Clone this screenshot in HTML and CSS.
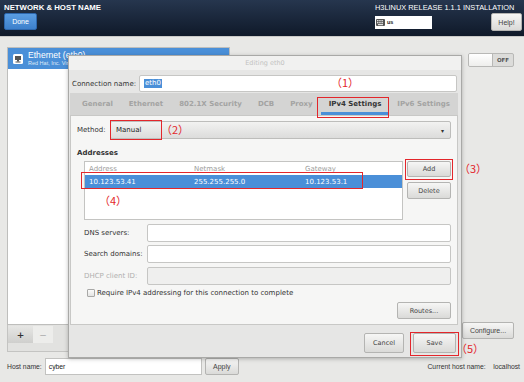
FILE: index.html
```html
<!DOCTYPE html>
<html lang="en">
<head>
    <meta charset="UTF-8">
    <title>Network &amp; Host Name</title>
    <link rel="stylesheet" href="styles.css">
</head>
<body>

    <div class="topbar">
        <div class="top-left">
            <div class="top-title">NETWORK &amp; HOST NAME</div>
            <button class="btn-done">Done</button>
        </div>
        <div class="top-right">
            <div class="release">H3LINUX RELEASE 1.1.1 INSTALLATION</div>
            <div class="top-row">
                <div class="kbd-box">
                    <svg class="kbd-icon" width="9" height="7" viewBox="0 0 9 7">
                        <rect x="0" y="0" width="9" height="7" rx="1" fill="#555"/>
                        <rect x="1" y="1" width="1.5" height="1.3" fill="#ddd"/>
                        <rect x="3.2" y="1" width="1.5" height="1.3" fill="#ddd"/>
                        <rect x="5.4" y="1" width="1.5" height="1.3" fill="#ddd"/>
                        <rect x="1" y="3" width="1.5" height="1.3" fill="#ddd"/>
                        <rect x="3.2" y="3" width="1.5" height="1.3" fill="#ddd"/>
                        <rect x="5.4" y="3" width="1.5" height="1.3" fill="#ddd"/>
                        <rect x="2" y="5" width="5" height="1.2" fill="#ddd"/>
                    </svg>
                    <span>us</span>
                </div>
                <button class="btn btn-help">Help!</button>
            </div>
        </div>
    </div>

    <div class="main">
        <div class="panes">
            <div class="devices">
                <div class="device-list">
                    <div class="device selected">
                        <svg class="dev-icon" width="10" height="10" viewBox="0 0 10 10">
                            <rect x="0" y="0" width="10" height="10" rx="1.5" fill="#fff"/>
                            <rect x="2" y="2" width="6" height="4" fill="#555"/>
                            <rect x="4" y="6" width="2" height="1.5" fill="#555"/>
                            <rect x="2.5" y="7.5" width="5" height="1" fill="#555"/>
                        </svg>
                        <div class="dev-text">
                            <div class="dev-name">Ethernet (eth0)</div>
                            <div class="dev-sub">Red Hat, Inc. Virtio network device</div>
                        </div>
                    </div>
                </div>
                <div class="list-tools">
                    <button class="tool">+</button>
                    <button class="tool off">&minus;</button>
                </div>
            </div>
            <div class="detail">
                <div class="toggle">
                    <span class="knob"></span>
                    <span class="toggle-text">OFF</span>
                </div>
                <button class="btn btn-configure">Configure...</button>
            </div>
        </div>

        <div class="hostbar">
            <span class="host-label">Host name:</span>
            <div class="host-input">cyber</div>
            <button class="btn btn-apply">Apply</button>
            <span class="current-host">Current host name:&nbsp;&nbsp;&nbsp;&nbsp;localhost</span>
        </div>
    </div>

    <!-- Editing dialog, floating above the page -->
    <div class="dialog">
        <div class="dlg-title">Editing eth0</div>
        <div class="dlg-body">
            <div class="conn-row">
                <span class="conn-label">Connection name:</span>
                <div class="field conn-field"><span class="sel">eth0</span></div>
            </div>

            <div class="tabs">
                <span class="tab">General</span>
                <span class="tab">Ethernet</span>
                <span class="tab">802.1X Security</span>
                <span class="tab">DCB</span>
                <span class="tab">Proxy</span>
                <span class="tab active">IPv4 Settings</span>
                <span class="tab">IPv6 Settings</span>
            </div>

            <div class="tab-panel">
                <div class="method-row">
                    <span class="method-label">Method:</span>
                    <div class="combo">
                        <span>Manual</span>
                        <span class="arrow">&#9662;</span>
                    </div>
                </div>

                <div class="section-title">Addresses</div>
                <div class="addresses">
                    <div class="addr-table">
                        <div class="addr-row addr-head">
                            <span>Address</span><span>Netmask</span><span>Gateway</span>
                        </div>
                        <div class="addr-row addr-sel">
                            <span>10.123.53.41</span><span>255.255.255.0</span><span>10.123.53.1</span>
                        </div>
                    </div>
                    <div class="addr-buttons">
                        <button class="btn btn-add">Add</button>
                        <button class="btn btn-delete">Delete</button>
                    </div>
                </div>

                <div class="form-row first">
                    <span class="form-label">DNS servers:</span>
                    <div class="field"></div>
                </div>
                <div class="form-row">
                    <span class="form-label">Search domains:</span>
                    <div class="field"></div>
                </div>
                <div class="form-row dim">
                    <span class="form-label">DHCP client ID:</span>
                    <div class="field disabled"></div>
                </div>

                <div class="check-row">
                    <span class="check"></span>
                    <span>Require IPv4 addressing for this connection to complete</span>
                </div>

                <div class="routes-row">
                    <button class="btn btn-routes">Routes...</button>
                </div>
            </div>

            <div class="dlg-buttons">
                <button class="btn btn-cancel">Cancel</button>
                <button class="btn btn-save">Save</button>
            </div>
        </div>
    </div>

    <!-- red annotation marks drawn over the screenshot -->
    <div class="mark mark-tab"></div>
    <div class="mark mark-method"></div>
    <div class="mark mark-add"></div>
    <div class="mark mark-addr"></div>
    <div class="mark mark-save"></div>

    <span class="note note-1">（1）</span>
    <span class="note note-2">（2）</span>
    <span class="note note-3">（3）</span>
    <span class="note note-4">（4）</span>
    <span class="note note-5">（5）</span>

</body>
</html>
```

FILE: styles.css
```css
/* General */
body {
    margin: 0;
    width: 524px;
    height: 382px;
    overflow: hidden;
    position: relative;
    background: #e8e8e6;
    font-family: 'DejaVu Sans', sans-serif;
    font-size: 7px;
    color: #333;
}

button {
    font-family: inherit;
    padding: 0;
}

.btn {
    background: linear-gradient(#f6f6f5, #dadad8);
    border: 1px solid #b4b4b2;
    border-radius: 2px;
    color: #444;
    font-size: 6.5px;
    height: 17px;
    box-sizing: border-box;
}

/* Top bar */
.topbar {
    height: 37px;
    box-sizing: border-box;
    padding: 3px 2px 0 4px;
    display: flex;
    justify-content: space-between;
    background: linear-gradient(#26364e, #0f1929);
    border-bottom: 1px solid #c9c9c7;
    font-family: 'Liberation Sans', sans-serif;
    color: white;
}

.top-title {
    font-weight: bold;
    font-size: 7.8px;
    line-height: 9px;
}

.btn-done {
    margin-top: 1px;
    width: 33px;
    height: 17px;
    background: linear-gradient(#5a9de2, #3d80cc);
    border: 1px solid #2d67ad;
    border-radius: 2px;
    color: white;
    font-family: 'Liberation Sans', sans-serif;
    font-size: 7px;
}

.top-right {
    display: flex;
    flex-direction: column;
    align-items: flex-start;
}

.release {
    font-size: 7.4px;
    line-height: 9px;
    white-space: nowrap;
}

.top-row {
    display: flex;
    align-items: center;
    gap: 59px;
    margin-top: 1px;
}

.kbd-box {
    width: 57px;
    height: 13px;
    background: white;
    display: flex;
    align-items: center;
    gap: 2px;
    padding-left: 1px;
    box-sizing: border-box;
    color: #222;
    font-weight: bold;
    font-size: 5.5px;
}

.btn-help {
    width: 31px;
    height: 18px;
    font-family: 'Liberation Sans', sans-serif;
    font-size: 7px;
}

/* Main area */
.panes {
    height: 315px;
    box-sizing: border-box;
    padding: 10px 10px 0 7px;
    display: flex;
}

.devices {
    width: 223px;
    display: flex;
    flex-direction: column;
}

.device-list {
    height: 278px;
    background: white;
    border: 1px solid #bebebc;
    box-sizing: border-box;
}

.device {
    height: 21px;
    display: flex;
    align-items: center;
    gap: 5px;
    padding-left: 5px;
}

.device.selected {
    background: #4a8fd8;
    color: white;
}

.dev-text {
    font-family: 'Liberation Sans', sans-serif;
}

.dev-name {
    font-size: 8.6px;
    line-height: 10px;
}

.dev-sub {
    font-size: 5.5px;
    line-height: 7px;
    color: #dfe9f7;
}

.list-tools {
    flex: 1;
    border: 1px solid #c4c4c2;
    border-top: none;
    background: #e2e2e0;
    display: flex;
    align-items: flex-start;
    padding-top: 1px;
}

.tool {
    width: 25px;
    height: 17px;
    border: none;
    background: linear-gradient(#e6e6e4, #cfcfcd);
    font-size: 9px;
    font-weight: bold;
    color: #333;
}

.tool.off {
    width: 20px;
    background: #ededeb;
    color: #aaa;
    font-weight: normal;
}

.detail {
    flex: 1;
    display: flex;
    flex-direction: column;
    align-items: flex-end;
}

.toggle {
    margin-top: 6px;
    width: 46px;
    height: 14px;
    display: flex;
    border: 1px solid #b8b8b6;
    border-radius: 2px;
    box-sizing: border-box;
    background: #dcdcda;
    overflow: hidden;
}

.knob {
    width: 23px;
    background: linear-gradient(#ffffff, #eeeeec);
    border-right: 1px solid #b8b8b6;
}

.toggle-text {
    flex: 1;
    text-align: center;
    line-height: 12px;
    font-size: 5.5px;
    font-weight: bold;
    color: #555;
}

.btn-configure {
    margin-top: auto;
    margin-bottom: 13px;
    width: 52px;
    font-family: 'Liberation Sans', sans-serif;
    font-size: 7px;
}

/* Host name bar */
.hostbar {
    margin-top: 6px;
    height: 17px;
    display: flex;
    align-items: center;
    padding: 0 4px 0 7px;
    font-family: 'Liberation Sans', sans-serif;
    font-size: 6.8px;
    color: #333;
}

.host-input {
    margin-left: 3px;
    width: 157px;
    height: 17px;
    box-sizing: border-box;
    background: white;
    border: 1px solid #c2c2c0;
    padding-left: 3px;
    line-height: 15px;
    color: #222;
}

.btn-apply {
    margin-left: 3px;
    width: 34px;
    font-family: 'Liberation Sans', sans-serif;
    font-size: 7px;
}

.current-host {
    margin-left: auto;
}

/* Dialog */
.dialog {
    position: absolute;
    left: 68px;
    top: 55px;
    width: 394px;
    height: 303px;
    box-sizing: border-box;
    background: #e6e6e5;
    border: 1px solid #a9a9a7;
    box-shadow: 0 1px 4px rgba(0, 0, 0, 0.25);
}

.dlg-title {
    height: 14px;
    line-height: 14px;
    text-align: center;
    background: #f1f1f0;
    color: #c2c2c0;
    font-size: 6.5px;
}

.dlg-body {
    padding: 0 3px 0 1px;
}

.conn-row {
    margin-top: 5px;
    display: flex;
    align-items: center;
}

.conn-label {
    width: 69px;
    padding-left: 2px;
    box-sizing: border-box;
}

.field {
    flex: 1;
    height: 18px;
    box-sizing: border-box;
    background: white;
    border: 1px solid #c6c6c4;
    border-radius: 2px;
    display: flex;
    align-items: center;
    padding-left: 4px;
}

.conn-field {
    height: 17px;
    margin-right: 1px;
}

.sel {
    background: #4a8fd8;
    color: white;
    padding: 0 1px;
    line-height: 9px;
}

.tabs {
    margin-top: 1px;
    height: 22px;
    background: #d4d4d3;
    display: flex;
    align-items: stretch;
    padding-left: 4px;
}

.tab {
    padding: 0 8px;
    display: flex;
    align-items: center;
    font-weight: bold;
    color: #a3a3a2;
    border-bottom: 3px solid transparent;
    padding-top: 3px;
}

.tab.active {
    color: #353535;
    border-bottom-color: #4a8fd8;
}

.tab-panel {
    background: #f6f6f5;
    border: 1px solid #c8c8c6;
    padding: 0 6px 5px 6px;
}

.method-row {
    margin-top: 5px;
    display: flex;
    align-items: center;
}

.method-label {
    width: 33px;
}

.combo {
    flex: 1;
    height: 18px;
    box-sizing: border-box;
    background: linear-gradient(#f2f2f1, #dcdcdb);
    border: 1px solid #bdbdbb;
    border-radius: 2px;
    display: flex;
    align-items: center;
    justify-content: space-between;
    padding: 0 6px 0 5px;
    color: #222;
}

.arrow {
    font-size: 6px;
    color: #333;
}

.section-title {
    margin-top: 10px;
    line-height: 8px;
    font-weight: bold;
}

.addresses {
    margin-top: 4px;
    margin-left: 7px;
    display: flex;
    gap: 4px;
}

.addr-table {
    width: 319px;
    height: 59px;
    box-sizing: border-box;
    background: white;
    border: 1px solid #c4c4c2;
}

.addr-row {
    display: grid;
    grid-template-columns: 105px 111px 1fr;
    padding-left: 4px;
    height: 13px;
    align-items: center;
}

.addr-head {
    color: #9c9c9b;
}

.addr-sel {
    background: #4a8fd8;
    color: white;
}

.addr-buttons {
    flex: 1;
    display: flex;
    flex-direction: column;
    gap: 5px;
}

.btn-add {
    height: 16px;
}

.form-row {
    margin-top: 3px;
    margin-left: 7px;
    display: flex;
    align-items: center;
}

.form-row.first {
    margin-top: 4px;
}

.form-row.dim {
    margin-top: 4px;
    color: #b0b0af;
}

.form-label {
    width: 63px;
}

.field.disabled {
    background: #efefee;
}

.check-row {
    margin-top: 3px;
    margin-left: 10px;
    height: 10px;
    display: flex;
    align-items: center;
    gap: 2px;
}

.check {
    width: 8px;
    height: 8px;
    box-sizing: border-box;
    border: 1px solid #a8a8a6;
    border-radius: 1px;
    background: linear-gradient(#fbfbfa, #e4e4e3);
}

.routes-row {
    margin-top: 4px;
    display: flex;
    justify-content: flex-end;
}

.btn-routes {
    width: 54px;
}

.dlg-buttons {
    margin-top: 8px;
    display: flex;
    justify-content: flex-end;
    gap: 9px;
    padding-right: 2px;
}

.btn-cancel {
    width: 40px;
    height: 20px;
}

.btn-save {
    width: 43px;
    height: 20px;
}

/* Annotations */
.mark {
    position: absolute;
    border: 1.5px solid #e3262b;
    box-sizing: border-box;
}

.mark-tab { left: 317px; top: 97px; width: 72px; height: 21px; }
.mark-method { left: 110px; top: 120px; width: 52px; height: 20px; }
.mark-add { left: 405px; top: 159px; width: 48px; height: 21px; }
.mark-addr { left: 81px; top: 172px; width: 282px; height: 17px; }
.mark-save { left: 410px; top: 332px; width: 49px; height: 24px; }

.note {
    position: absolute;
    font-family: 'Noto Sans CJK SC', sans-serif;
    font-size: 11px;
    line-height: 11px;
    color: #e3262b;
    white-space: nowrap;
}

.note-1 { left: 331px; top: 77px; }
.note-2 { left: 161px; top: 124px; }
.note-3 { left: 459px; top: 163px; }
.note-4 { left: 99px; top: 195px; }
.note-5 { left: 456px; top: 343px; }
```
